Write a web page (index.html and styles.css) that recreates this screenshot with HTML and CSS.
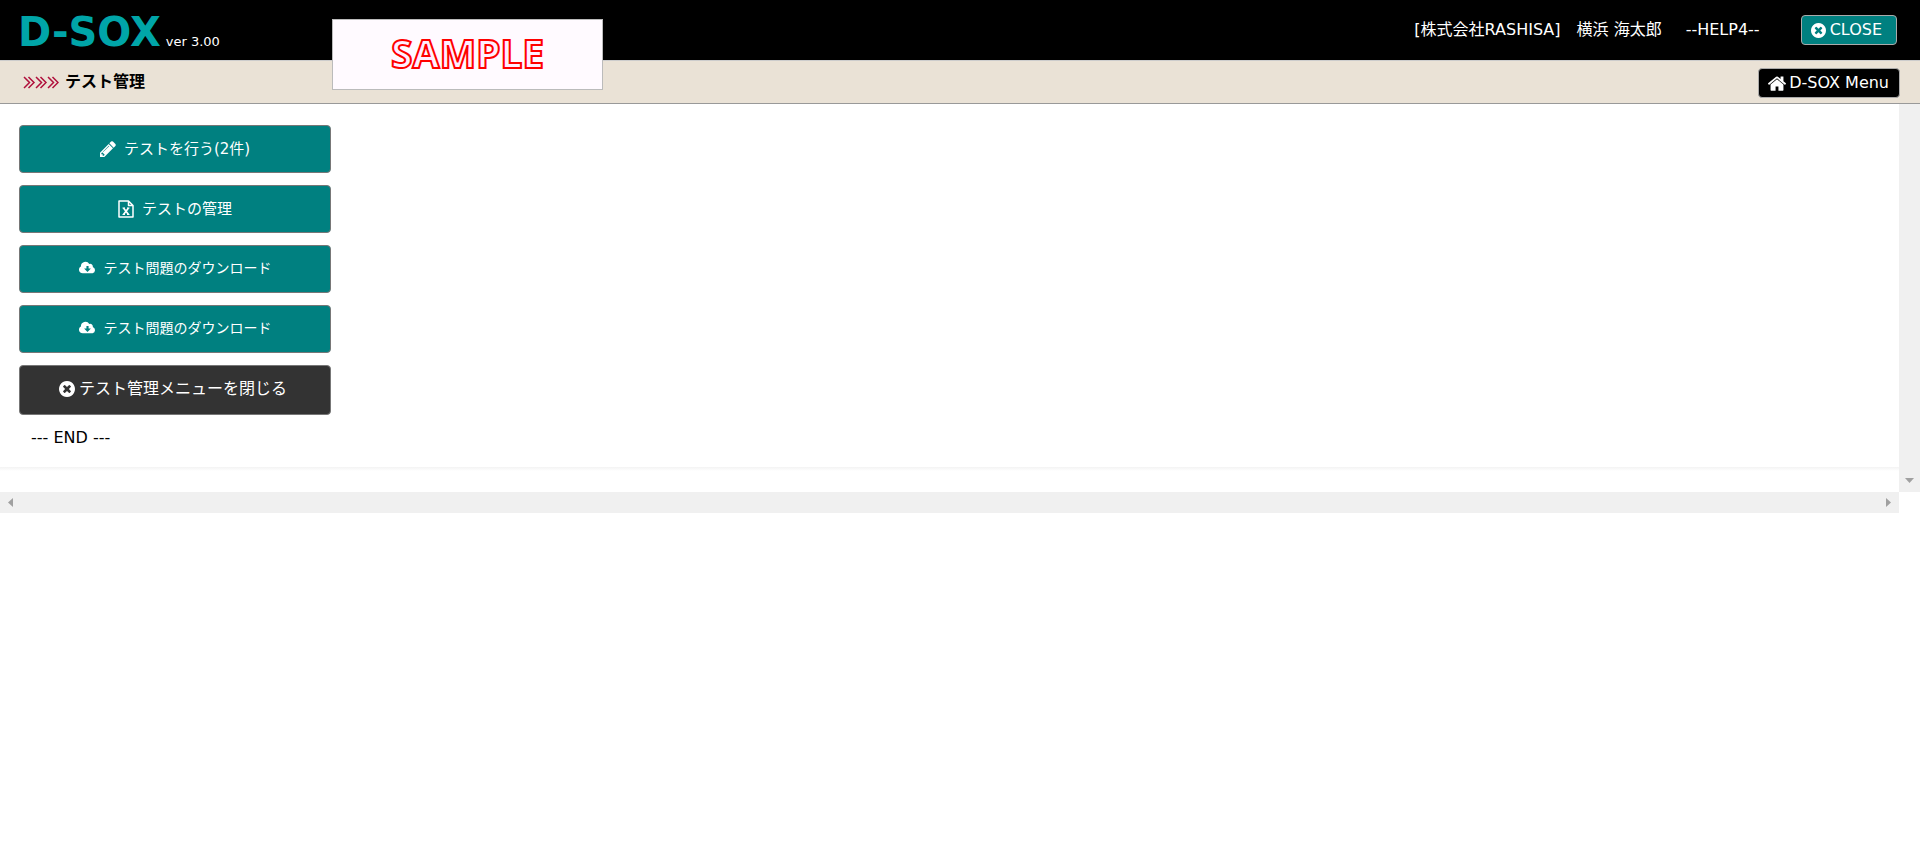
FILE: index.html
```html
<!DOCTYPE html>
<html lang="ja">
<head>
<meta charset="utf-8">
<title>D-SOX テスト管理</title>
<link rel="stylesheet" href="styles.css">
</head>
<body>
<svg class="sprite" aria-hidden="true">
  <symbol id="i-close" viewBox="128 128 1536 1536"><path d="M1277 1122q0-26-19-45l-181-181 181-181q19-19 19-45 0-27-19-46l-90-90q-19-19-46-19-26 0-45 19l-181 181-181-181q-19-19-45-19-27 0-46 19l-90 90q-19 19-19 46 0 26 19 45l181 181-181 181q-19 19-19 45 0 27 19 46l90 90q19 19 46 19 26 0 45-19l181-181 181 181q19 19 45 19 27 0 46-19l90-90q19-19 19-46zm387-226q0 209-103 385.5t-279.5 279.5-385.5 103-385.5-103-279.5-279.5-103-385.5 103-385.5 279.5-279.5 385.5-103 385.5 103 279.5 279.5 103 385.5z"/></symbol>
  <symbol id="i-home" viewBox="90 220 1612 1340"><path d="M1472 992v480q0 26-19 45t-45 19h-384v-384h-256v384h-384q-26 0-45-19t-19-45v-480q0-1 .5-3t.5-3l575-474 575 474q1 2 1 6zm223-69l-62 74q-8 9-21 11h-3q-13 0-21-7l-692-577-692 577q-12 8-24 7-13-2-21-11l-62-74q-8-10-7-23.5t11-21.5l719-599q32-26 76-26t76 26l244 204v-195q0-14 9-23t23-9h192q14 0 23 9t9 23v408l219 182q10 8 11 21.5t-7 23.5z"/></symbol>
  <symbol id="i-pencil" viewBox="128 128 1536 1536"><path d="M491 1536l91-91-235-235-91 91v107h128v128h107zm523-928q0-22-22-22-10 0-17 7l-542 542q-7 7-7 17 0 22 22 22 10 0 17-7l542-542q7-7 7-17zm-54-192l416 416-832 832h-416v-416zm683 96q0 53-37 90l-166 166-416-416 166-165q36-38 90-38 53 0 91 38l235 234q37 39 37 91z"/></symbol>
  <symbol id="i-cloud" viewBox="0 1 16 12"><path fill-rule="evenodd" d="M3.400 12.500A3.400 3.400 0 0 1 1.800 6.100 4.300 4.300 0 0 1 9.700 3.600 2.600 2.600 0 0 1 13 6.600 3.100 3.100 0 0 1 12.800 12.500ZM7 5.500V8H4.800L8 11.200 11.200 8H9V5.500Z"/></symbol>
  <symbol id="i-excel" viewBox="0 0 16 18"><path fill="none" stroke="currentColor" stroke-width="1.500" stroke-linejoin="round" d="M1 1H10.500L15 5.500V17H1ZM10.500 1V5.500H15"/><path fill="none" stroke="currentColor" stroke-width="1.700" d="M5.500 8 10.500 14.500M10.500 8 5.500 14.500"/><path fill="none" stroke="currentColor" d="M4.500 8H7M9 8H11.500M4.500 14.500H7M9 14.500H11.500"/></symbol>
  <symbol id="i-chevrons" viewBox="0 0 36 13"><path fill="none" stroke="currentColor" stroke-width="1.500" d="M1 1 6.500 6.500 1 12M5.500 1 11 6.500 5.500 12M13 1 18.500 6.500 13 12M17.500 1 23 6.500 17.500 12M25 1 30.500 6.500 25 12M29.500 1 35 6.500 29.500 12"/></symbol>
</svg>
<header class="topbar">
  <div class="brand"><span class="logo">D-SOX</span><span class="version">ver 3.00</span></div>
  <div class="account">
    <span class="user">[株式会社RASHISA]　横浜 海太郎</span>
    <span class="help">--HELP4--</span>
    <button class="btn btn-close" type="button"><svg class="icon-s"><use href="#i-close"/></svg>CLOSE</button>
  </div>
  <div class="sample">SAMPLE</div>
</header>
<div class="titlebar">
  <h1 class="title"><svg class="chevrons"><use href="#i-chevrons"/></svg>テスト管理</h1>
  <button class="btn btn-home" type="button"><svg class="icon-home"><use href="#i-home"/></svg>D-SOX Menu</button>
</div>
<div class="frame">
  <main class="content">
    <nav class="menu">
      <button class="item" type="button"><svg class="icon"><use href="#i-pencil"/></svg>テストを行う(2件)</button>
      <button class="item" type="button"><svg class="icon tall"><use href="#i-excel"/></svg>テストの管理</button>
      <button class="item download" type="button"><svg class="icon cloud"><use href="#i-cloud"/></svg>テスト問題のダウンロード</button>
      <button class="item download" type="button"><svg class="icon cloud"><use href="#i-cloud"/></svg>テスト問題のダウンロード</button>
      <button class="item dark" type="button"><svg class="icon"><use href="#i-close"/></svg>テスト管理メニューを閉じる</button>
    </nav>
    <p class="end">--- END ---</p>
  </main>
  <div class="vbar"><svg class="down" viewBox="0 0 9 5"><path d="M0 0H9L4.500 5Z"/></svg></div>
  <div class="hbar"><svg class="side" viewBox="0 0 5 9"><path d="M5 0V9L0 4.500Z"/></svg><svg class="side" viewBox="0 0 5 9"><path d="M0 0V9L5 4.500Z"/></svg></div>
</div>
</body>
</html>
```
FILE: styles.css
```css
* { box-sizing: border-box; }
body {
  margin: 0;
  background: #fff;
  color: #000;
  font: 16px/24px "DejaVu Sans", "Noto Sans CJK JP", sans-serif;
}
svg { flex: none; fill: currentColor; }
.sprite { position: absolute; width: 0; height: 0; }
button { font: inherit; cursor: pointer; }

.topbar {
  position: relative;
  display: flex;
  justify-content: space-between;
  height: 60px;
  padding: 0 23px 0 18px;
  background: #000;
  color: #fff;
}
.brand { display: flex; align-items: baseline; gap: 5px; }
.logo { color: #00a5a8; font-size: 40px; font-weight: bold; line-height: 64px; }
.version { font-size: 13px; }
.account { display: flex; align-items: center; }
.user { margin-right: 24px; }
.help { margin-right: 41px; }
.sample {
  position: absolute;
  left: 332px;
  top: 19px;
  width: 271px;
  height: 71px;
  border: 1px solid #bbb;
  background: #fffaff;
  color: #fef;
  font: bold 39px/65px "Noto Sans", sans-serif;
  text-align: center;
  -webkit-text-stroke: 2px #f00;
}
.btn {
  display: flex;
  align-items: center;
  height: 30px;
  border: 1px solid #aaa;
  border-radius: 4px;
  color: #fff;
}
.btn-close { gap: 4px; padding: 0 14px 0 9px; background: #008080; }
.btn-home { gap: 3px; padding: 0 10px 0 9px; background: #000; }
.icon-s { width: 15px; height: 15px; }
.icon-home { width: 18px; height: 15px; }

.titlebar {
  display: flex;
  align-items: center;
  justify-content: space-between;
  height: 44px;
  padding: 2px 20px 0 23px;
  border-top: 1px solid #ccc;
  border-bottom: 1px solid #999;
  background: #eae2d6;
}
.title { display: flex; align-items: center; gap: 6px; margin: 0; padding-bottom: 2px; font-size: 16px; line-height: 24px; }
.chevrons { width: 36px; height: 13px; color: #b0103c; }

.frame { display: grid; grid-template-columns: 1fr 21px; }
.content { padding: 21px 19px 0; height: 388px; background: linear-gradient(#f3f3f3, #fff) 0 363px / 100% 4px no-repeat; }
.menu { display: flex; flex-direction: column; gap: 12px; width: 312px; }
.item {
  display: flex;
  align-items: center;
  justify-content: center;
  gap: 8px;
  height: 48px;
  padding: 0 12px;
  border: 1px solid #777;
  border-radius: 4px;
  background: #008080;
  color: #fff;
  font-size: 15px;
}
.download { padding-bottom: 3px; font-size: 14px; }
.dark { gap: 4px; height: 50px; padding: 0 4px 2px 0; background: #333; font-size: 16px; }
.icon { width: 16px; height: 16px; }
.tall { height: 18px; }
.cloud { width: 17px; height: 13px; }
.end { margin: 11px 0 0 12px; }
.vbar, .hbar { display: flex; background: #f0f0f0; color: #a0a0a0; }
.vbar { align-items: flex-end; justify-content: center; padding-bottom: 9px; }
.hbar { align-items: center; justify-content: space-between; height: 21px; padding: 0 8px; }
.down { width: 9px; height: 5px; }
.side { width: 5px; height: 9px; }
```
